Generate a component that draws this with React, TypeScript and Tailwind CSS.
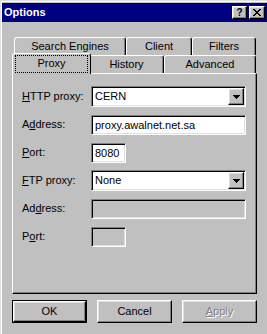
import React from "react";

const raised =
  "border border-t-white border-l-white border-r-black border-b-black shadow-[inset_-1px_-1px_0_#808080,inset_1px_1px_0_#dfdfdf]";
const sunken =
  "border border-t-[#808080] border-l-[#808080] border-r-white border-b-white shadow-[inset_1px_1px_0_#000,inset_-1px_-1px_0_#dfdfdf]";
const tabBase =
  "h-[18px] flex items-center justify-center border-l border-t border-r border-l-white border-t-white border-r-black rounded-t-[3px] shadow-[inset_-1px_0_0_#808080] bg-[#c0c0c0]";

function U({ children }: { children: React.ReactNode }) {
  return <span className="underline underline-offset-[1px]">{children}</span>;
}

function Arrow() {
  return (
    <svg width="7" height="4" viewBox="0 0 7 4" shapeRendering="crispEdges">
      <polygon points="0,0 7,0 3.5,4" fill="#000" />
    </svg>
  );
}

function Combo({ value }: { value: string }) {
  return (
    <div className={`${sunken} h-[21px] w-[155px] bg-white flex items-center pl-[3px] pr-[1px]`}>
      <span className="flex-1 leading-none">{value}</span>
      <div className={`${raised} w-[16px] h-[17px] bg-[#c0c0c0] flex items-center justify-center`}>
        <Arrow />
      </div>
    </div>
  );
}

function Row({ label, children }: { label: React.ReactNode; children: React.ReactNode }) {
  return (
    <div className="flex h-[21px] items-center">
      <div className="w-[69px] leading-none">{label}</div>
      {children}
    </div>
  );
}

export default function App() {
  return (
    <div className="w-[267px] h-[334px] bg-[#c0c0c0] overflow-hidden font-['Liberation_Sans',Arial,sans-serif] text-[11px] text-black border-t border-l border-[#dfdfdf]">
      <div className="h-full border-t border-l border-white pt-[1px]">
        {/* Title bar */}
        <div className="h-[19px] bg-[#000080] flex items-center pl-[2px] pr-[2px]">
          <span className="flex-1 text-white font-bold text-[11px] leading-none">Options</span>
          <div className={`${raised} w-[15px] h-[13px] bg-[#c0c0c0] flex items-center justify-center font-bold text-[10px] leading-none`}>
            ?
          </div>
          <div className={`${raised} ml-[2px] w-[16px] h-[13px] bg-[#c0c0c0] flex items-center justify-center`}>
            <svg width="8" height="7" viewBox="0 0 8 7" shapeRendering="crispEdges">
              <path d="M0 0h2v1h1v1h2V1h1V0h2v1H7v1H6v1H5v1h1v1h1v1h1v1H6V6H5V5H3v1H2v1H0V6h1V5h1V4h1V3H2V2H1V1H0z" fill="#000" />
            </svg>
          </div>
        </div>

        <div className="ml-[10px] w-[245px] mt-[15px]">
          {/* Back row tabs */}
          <div className="flex h-[18px] pl-[2px]">
            <div className={`${tabBase} w-[112px]`}>Search Engines</div>
            <div className={`${tabBase} w-[66px]`}>Client</div>
            <div className={`${tabBase} w-[64px]`}>Filters</div>
          </div>
          {/* Front row tabs */}
          <div className="flex h-[18px] pl-[2px] items-start">
            <div className={`${tabBase} relative z-10 w-[79px] h-[21px] -ml-[2px] -mr-[2px] -mt-[2px] shadow-none`}>
              <span className="pb-[1px]">Proxy</span>
              <div className="absolute left-[2px] right-[2px] top-[1px] bottom-[1px] border border-dotted border-black" />
            </div>
            <div className={`${tabBase} w-[75px]`}>History</div>
            <div className={`${tabBase} w-[92px]`}>Advanced</div>
          </div>
          {/* Panel */}
          <div className="h-[221px] border border-t-white border-l-white border-r-black border-b-black shadow-[inset_-1px_-1px_0_#808080] pt-[12px] pl-[9px] flex flex-col gap-[7px]">
            <Row label={<><U>H</U>TTP proxy:</>}>
              <Combo value="CERN" />
            </Row>
            <Row label={<>A<U>d</U>dress:</>}>
              <div className={`${sunken} self-end h-[20px] w-[155px] bg-white flex items-center pl-[3px] leading-none`}>
                proxy.awalnet.net.sa
              </div>
            </Row>
            <Row label={<><U>P</U>ort:</>}>
              <div className={`${sunken} self-end h-[20px] w-[35px] bg-white flex items-center pl-[3px] leading-none`}>
                8080
              </div>
            </Row>
            <Row label={<><U>F</U>TP proxy:</>}>
              <Combo value="None" />
            </Row>
            <Row label={<>Ad<U>d</U>ress:</>}>
              <div className={`${sunken} self-end h-[20px] w-[155px] bg-[#c0c0c0]`} />
            </Row>
            <Row label={<>P<U>o</U>rt:</>}>
              <div className={`${sunken} self-end h-[20px] w-[35px] bg-[#c0c0c0]`} />
            </Row>
          </div>
          {/* Buttons */}
          <div className="flex justify-between mt-[6px]">
            <div className="w-[75px] h-[23px] border border-black">
              <div className={`${raised} w-full h-full bg-[#c0c0c0] flex items-center justify-center leading-none`}>
                OK
              </div>
            </div>
            <div className={`${raised} w-[75px] h-[23px] bg-[#c0c0c0] flex items-center justify-center leading-none`}>
              Cancel
            </div>
            <div className={`${raised} w-[75px] h-[23px] bg-[#c0c0c0] flex items-center justify-center leading-none text-[#808080] [text-shadow:1px_1px_0_#fff]`}>
              <U>A</U>pply
            </div>
          </div>
        </div>
      </div>
    </div>
  );
}
